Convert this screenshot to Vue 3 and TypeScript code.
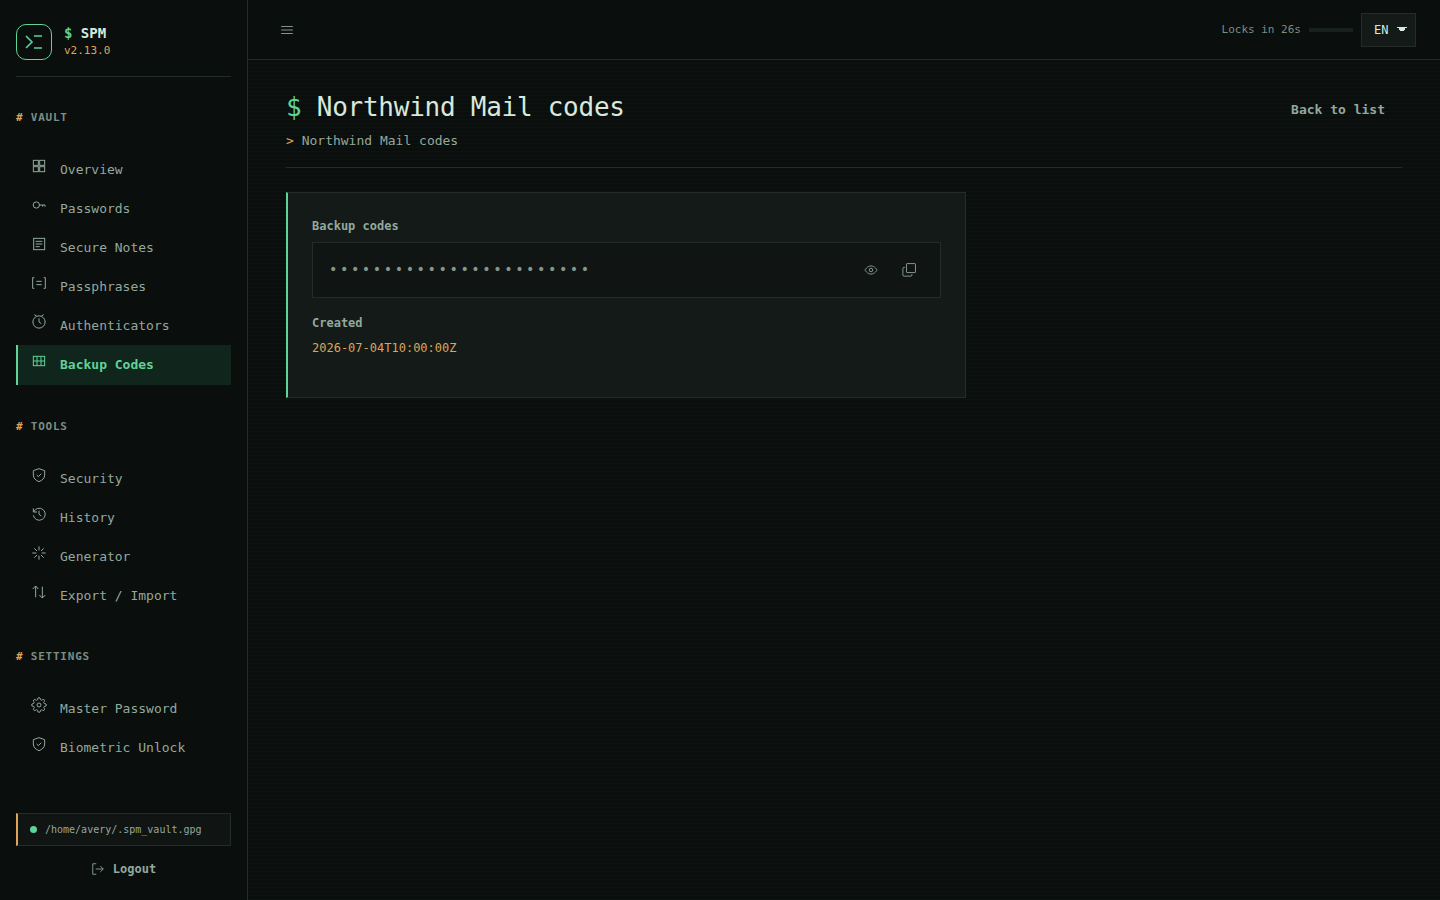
<script setup lang="ts">
import { ref } from 'vue'

interface NavItem {
  label: string
  icon: string
  active?: boolean
}
interface NavGroup {
  title: string
  items: NavItem[]
}

const icons: Record<string, string> = {
  grid: '<rect x="3.500" y="3.500" width="7.500" height="7.500"/><rect x="13" y="3.500" width="7.500" height="7.500"/><rect x="3.500" y="13" width="7.500" height="7.500"/><rect x="13" y="13" width="7.500" height="7.500"/>',
  key: '<circle cx="8" cy="12" r="4.700"/><path d="M12.500 12H21v2.500M17.500 12v2.500"/>',
  note: '<rect x="4" y="3.500" width="16.500" height="17"/><path d="M7 8h10M7 12h10M7 16h6"/>',
  phrase: '<path d="M5 4H2.500v16H5M19 4h2.500v16H19M8 9.500h8M8 14.500h8"/>',
  clock: '<circle cx="12" cy="12" r="9.200"/><path d="M12 6.500v5.500l3.500 2.500M5 1l3.500 2M19 1l-3.500 2"/>',
  table: '<rect x="3.500" y="5" width="17" height="14"/><path d="M3.500 12h17M9 5v14M15 5v14"/>',
  shield: '<path d="M12 2.500l8.500 3v6.500c0 5-3.500 8-8.500 10-5-2-8.500-5-8.500-10V5.500z"/><path d="M8.500 12l2.500 2.500L15.500 10"/>',
  history: '<path d="M3.500 3.500V9H9M4 9a9 9 0 1 1-.5 5M12 7v5.500l3.500 2.500"/>',
  spark: '<path d="M12 2v6M12 16v6M2 12h6M16 12h6M5 5l4 4M15 15l4 4M19 5l-4 4M9 15l-4 4"/>',
  arrows: '<path d="M7 20V3M2.500 7.500L7 3l4 4.500M17 4v17M12.500 16.500L17 21l4.500-4.500"/>',
  gear: '<circle cx="12" cy="12" r="3"/><path d="M19.400 15a1.650 1.650 0 0 0 .33 1.820l.06.060a2 2 0 1 1-2.830 2.830l-.06-.06a1.650 1.650 0 0 0-2.800 1.170V21a2 2 0 0 1-4 0v-.09A1.650 1.650 0 0 0 7.200 19.700l-.06.060a2 2 0 1 1-2.830-2.830l.06-.06A1.650 1.650 0 0 0 3.200 14H3a2 2 0 0 1 0-4h.09A1.650 1.650 0 0 0 4.300 7.200l-.06-.06a2 2 0 1 1 2.830-2.830l.06.060A1.650 1.650 0 0 0 10 3.200V3a2 2 0 0 1 4 0v.09a1.650 1.650 0 0 0 2.800 1.200l.06-.06a2 2 0 1 1 2.830 2.830l-.06.060A1.650 1.650 0 0 0 20.800 10H21a2 2 0 0 1 0 4h-.09a1.650 1.650 0 0 0-1.510 1z"/>',
}

const groups: NavGroup[] = [
  {
    title: 'VAULT',
    items: [
      { label: 'Overview', icon: 'grid' },
      { label: 'Passwords', icon: 'key' },
      { label: 'Secure Notes', icon: 'note' },
      { label: 'Passphrases', icon: 'phrase' },
      { label: 'Authenticators', icon: 'clock' },
      { label: 'Backup Codes', icon: 'table', active: true },
    ],
  },
  {
    title: 'TOOLS',
    items: [
      { label: 'Security', icon: 'shield' },
      { label: 'History', icon: 'history' },
      { label: 'Generator', icon: 'spark' },
      { label: 'Export / Import', icon: 'arrows' },
    ],
  },
  {
    title: 'SETTINGS',
    items: [
      { label: 'Master Password', icon: 'gear' },
      { label: 'Biometric Unlock', icon: 'shield' },
    ],
  },
]

const language = ref('EN')
const mask = '•'.repeat(24)
</script>

<template>
  <div class="shell">
    <aside class="sidebar">
      <div class="brand">
        <svg class="logo" viewBox="0 0 36 36" fill="none" aria-hidden="true">
          <rect x="0.5" y="0.5" width="35" height="35" rx="9.500" stroke="currentColor" />
          <path d="M10 12l6 6-6 6M18 12h8M18 24h8" stroke="currentColor" stroke-width="1.600" />
        </svg>
        <div class="brand-text">
          <strong class="name"><span class="green">$</span> SPM</strong>
          <span class="version">v2.13.0</span>
        </div>
      </div>

      <nav class="nav">
        <section v-for="group in groups" :key="group.title">
          <h2><span class="amber">#</span> {{ group.title }}</h2>
          <a
            v-for="item in group.items"
            :key="item.label"
            href="#"
            class="item"
            :class="{ active: item.active }"
          >
            <svg class="icon" viewBox="0 0 24 24" aria-hidden="true" v-html="icons[item.icon]" />
            <span>{{ item.label }}</span>
          </a>
        </section>
      </nav>

      <div class="foot">
        <div class="path"><i class="dot"></i><span>/home/avery/.spm_vault.gpg</span></div>
        <button class="logout" type="button">
          <svg class="small-icon" viewBox="0 0 24 24" aria-hidden="true">
            <path d="M9 3H3v18h6M8 12h13M16 7l5 5-5 5" />
          </svg>
          Logout
        </button>
      </div>
    </aside>

    <div class="page">
      <header class="topbar">
        <button class="icon-button" type="button" aria-label="Toggle menu">
          <svg class="small-icon" viewBox="0 0 24 24" aria-hidden="true">
            <path d="M2 6h20M2 12h20M2 18h20" />
          </svg>
        </button>
        <div class="status">
          <span class="lock">Locks in 26s</span>
          <span class="meter"></span>
          <select v-model="language" aria-label="Language">
            <option>EN</option>
          </select>
        </div>
      </header>

      <main class="content">
        <div class="heading">
          <div>
            <h1><span class="green">$</span> Northwind Mail codes</h1>
            <p><span class="amber">&gt;</span> Northwind Mail codes</p>
          </div>
          <a href="#" class="back">Back to list</a>
        </div>

        <section class="card">
          <h3>Backup codes</h3>
          <div class="secret">
            <span class="mask">{{ mask }}</span>
            <button class="icon-button" type="button" aria-label="Show codes">
              <svg class="small-icon" viewBox="0 0 24 24" aria-hidden="true">
                <path d="M1.500 12S5.500 5 12 5s10.500 7 10.500 7-4 7-10.500 7S1.500 12 1.500 12z" />
                <circle cx="12" cy="12" r="3" />
              </svg>
            </button>
            <button class="icon-button" type="button" aria-label="Copy codes">
              <svg class="small-icon" viewBox="0 0 24 24" aria-hidden="true">
                <rect x="7.700" y="1" width="15.400" height="15.400" rx="1" />
                <path d="M5 7.500H3.500a2 2 0 0 0-2 2v11a2 2 0 0 0 2 2H15a2 2 0 0 0 2-2V19" />
              </svg>
            </button>
          </div>
          <h3>Created</h3>
          <time datetime="2026-07-04T10:00:00Z">2026-07-04T10:00:00Z</time>
        </section>
      </main>
    </div>
  </div>
</template>

<style>
body {
  margin: 0;
  background: #0a0e0d;
}
</style>

<style scoped>
.shell {
  display: grid;
  grid-template-columns: 248px minmax(0, 1fr);
  min-height: 100vh;
  background: #0a0e0d;
  color: #94a89d;
  font: 13px/20px "DejaVu Sans Mono", monospace;
}
.shell *,
.shell {
  box-sizing: border-box;
}
.sidebar {
  display: flex;
  flex-direction: column;
  padding: 24px 16px 16px;
  border-right: 1px solid #232c29;
}
.brand {
  display: flex;
  gap: 12px;
  padding-bottom: 16px;
  border-bottom: 1px solid #232c29;
}
.logo {
  width: 36px;
  height: 36px;
  color: #5fd398;
}
.brand-text {
  display: flex;
  flex-direction: column;
}
.name {
  font-size: 14px;
  line-height: 18px;
  color: #d7e8dc;
}
.version {
  font-size: 11px;
  line-height: 18px;
  color: #dda559;
}
.green {
  color: #5fd398;
}
.amber {
  color: #dda559;
}
.nav {
  display: flex;
  flex-direction: column;
  gap: 33px;
  padding-top: 32px;
}
h2 {
  margin: 0 0 24px;
  font-size: 11px;
  line-height: 17px;
  letter-spacing: 0.07em;
  color: #7a8d83;
}
.item {
  display: flex;
  gap: 12px;
  height: 39px;
  padding: 8px 12px;
  border-left: 2px solid transparent;
  color: inherit;
  text-decoration: none;
  line-height: 23px;
}
.item.active {
  height: 40px;
  background: #10251b;
  border-left-color: #5fd398;
  color: #5fd398;
  font-weight: 700;
}
.icon,
.small-icon {
  flex: none;
  fill: none;
  stroke: currentColor;
  stroke-width: 1.5;
}
.icon {
  width: 18px;
  height: 16px;
}
.small-icon {
  width: 14px;
  height: 14px;
}
.foot {
  display: flex;
  flex-direction: column;
  gap: 8px;
  margin-top: auto;
}
.path {
  display: flex;
  align-items: center;
  gap: 8px;
  height: 33px;
  padding: 0 12px;
  background: #101413;
  border: 1px solid #232c29;
  border-left: 2px solid #dda559;
  font-size: 10px;
}
.dot {
  width: 7px;
  height: 7px;
  border-radius: 50%;
  background: #5fd398;
}
button {
  padding: 0;
  border: 0;
  background: none;
  color: inherit;
  font: inherit;
}
.logout {
  display: flex;
  align-items: center;
  justify-content: center;
  gap: 8px;
  height: 30px;
  font-size: 12px;
  font-weight: 700;
}
.page {
  display: flex;
  flex-direction: column;
}
.topbar {
  display: flex;
  align-items: center;
  justify-content: space-between;
  height: 60px;
  padding: 0 24px;
  border-bottom: 1px solid #232c29;
}
.icon-button {
  display: grid;
  place-items: center;
  width: 30px;
  height: 30px;
}
.status {
  display: flex;
  align-items: center;
  gap: 8px;
}
.lock {
  font-size: 11px;
  color: #7a8d83;
}
.meter {
  width: 44px;
  height: 4px;
  background: #19211e;
}
select {
  appearance: none;
  width: 55px;
  height: 34px;
  padding: 0 12px;
  border: 1px solid #232c29;
  border-radius: 0;
  background-color: #131a17;
  background-image:
    linear-gradient(45deg, transparent 50%, #d7e8dc 50%),
    linear-gradient(135deg, #d7e8dc 50%, transparent 50%);
  background-position: right 13px top 13px, right 8px top 13px;
  background-size: 5px 5px;
  background-repeat: no-repeat;
  color: #d7e8dc;
  font: 12px "DejaVu Sans Mono", monospace;
}
.content {
  flex: 1;
  padding: 28px 38px;
  background: repeating-linear-gradient(to bottom, transparent 0 3px, #0d1311 3px 4px);
}
.heading {
  display: flex;
  justify-content: space-between;
  padding-bottom: 16px;
  border-bottom: 1px solid #232c29;
}
h1 {
  margin: 0;
  font-size: 26px;
  line-height: 38px;
  font-weight: 400;
  color: #d7e8dc;
  letter-spacing: -0.01em;
}
p {
  margin: 5px 0 0;
}
.back {
  padding: 12px 17px;
  color: inherit;
  font-weight: 700;
  text-decoration: none;
}
.card {
  max-width: 680px;
  margin-top: 24px;
  padding: 24px 24px 40px;
  border: 1px solid #232c29;
  border-left: 2px solid #5fd398;
  background: #131a17;
}
h3 {
  margin: 0 0 7px;
  font-size: 12px;
  line-height: 18px;
}
.secret {
  display: flex;
  align-items: center;
  gap: 8px;
  height: 56px;
  margin-bottom: 16px;
  padding: 0 16px;
  border: 1px solid #232c29;
  background: #101413;
}
.mask {
  flex: 1;
  padding-bottom: 2px;
  font-size: 14px;
  letter-spacing: 0.18em;
  color: #84978c;
}
time {
  display: block;
  font-size: 12px;
  line-height: 18px;
  color: #dda559;
}
</style>
